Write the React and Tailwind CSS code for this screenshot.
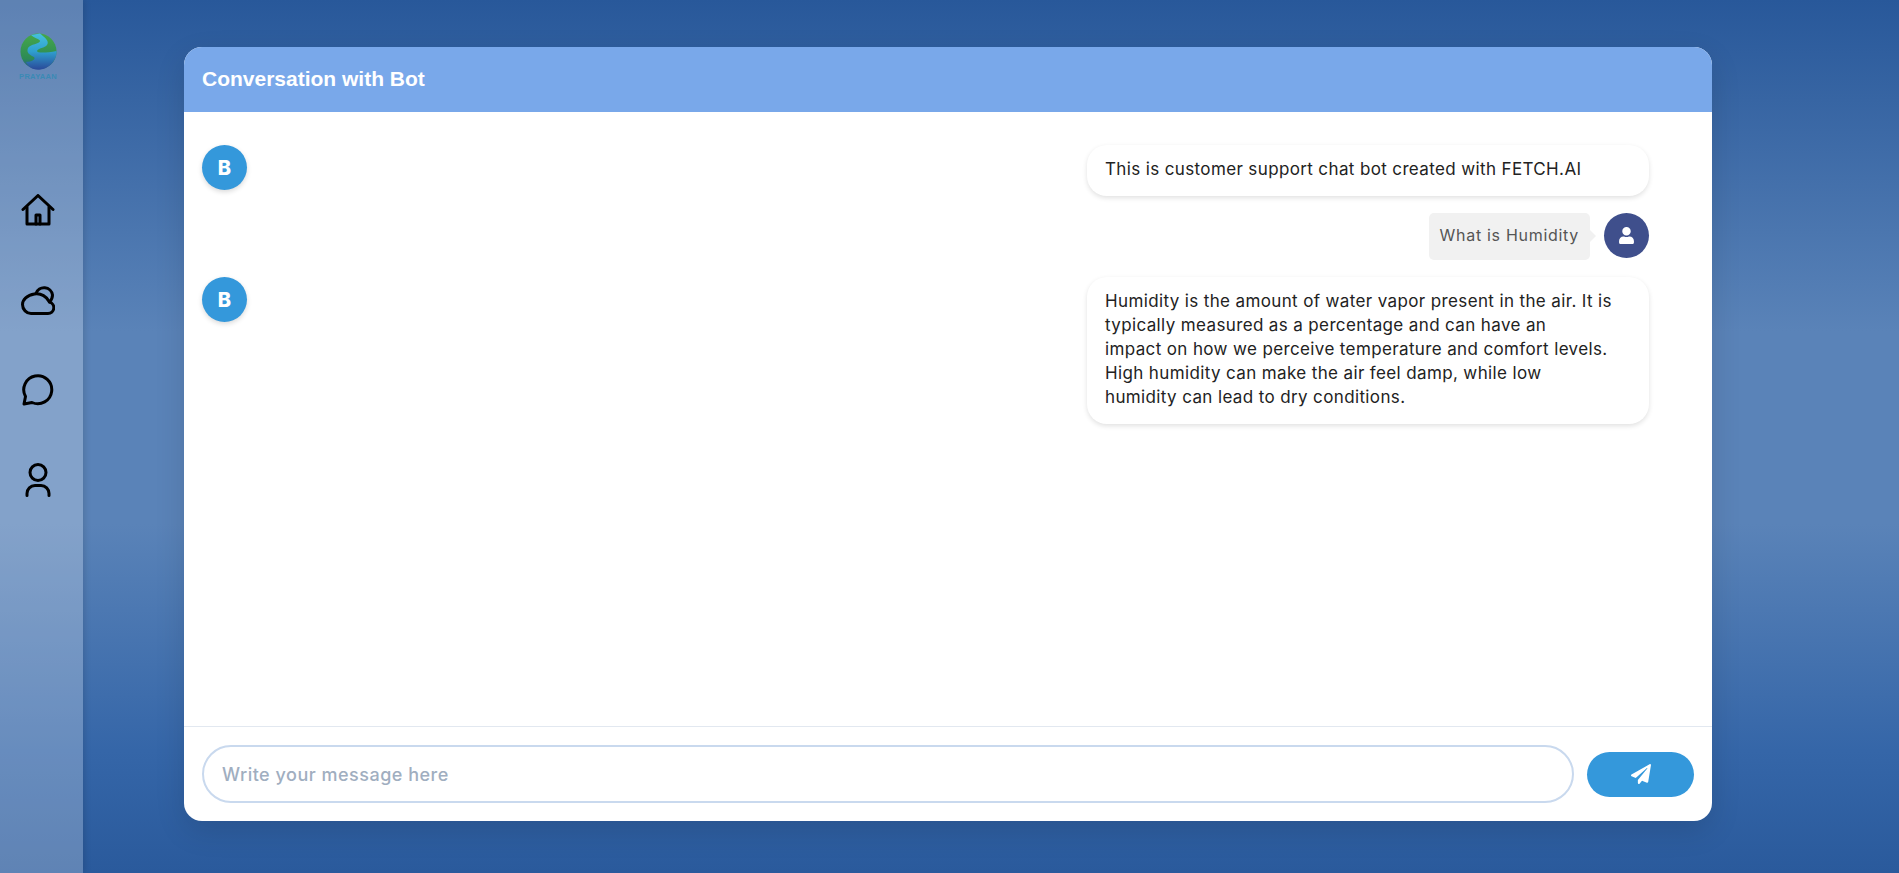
import React from "react";
import { FaPaperPlane, FaUser } from "react-icons/fa";

const Logo = () => (
  <div className="flex flex-col items-center">
    <svg width="37" height="37" viewBox="0 0 37 37">
      <defs>
        <linearGradient id="globe" x1="0" y1="0" x2="0" y2="1">
          <stop offset="0" stopColor="#46a84a" />
          <stop offset="0.7" stopColor="#2c8a55" />
          <stop offset="1" stopColor="#2a4f9c" />
        </linearGradient>
        <linearGradient id="river" x1="0" y1="0" x2="0" y2="1">
          <stop offset="0" stopColor="#45c0dc" />
          <stop offset="0.5" stopColor="#2f9fce" />
          <stop offset="1" stopColor="#2a4a9a" />
        </linearGradient>
      </defs>
      <circle cx="18.5" cy="18.5" r="18" fill="url(#globe)" />
      <path d="M11 2 20 .5C24 4 30 8 27 12c-2 3-9 3-10 6 0 2 9 2 19.500 0C37 28 28 36.500 18 36.500c-6 0-10-3.500-12-7.500 6 0 10-3 8-5-4-2-8-4-6-9 2-4 12-4 12-7 0-2-6-3-9-6z" fill="url(#river)" />
    </svg>
    <span className="mt-[3px] font-['Liberation_Sans',sans-serif] font-bold text-[7.5px] leading-[8px] tracking-[0.3px] text-[#3a8ab5]">PRAYAAN</span>
  </div>
);

const HomeIcon = () => (
  <svg width="34" height="32" viewBox="0 0 34 32" fill="none" stroke="#000" strokeWidth="3" strokeLinecap="round" strokeLinejoin="round">
    <path d="M2 15.500 17 1.500l15 14" />
    <path d="M6 13v17h22V13" />
    <path d="M15 30v-9h4v9" />
  </svg>
);

const CloudIcon = () => (
  <svg width="34" height="30" viewBox="0 0 34 30" fill="none" stroke="#000" strokeWidth="3" strokeLinejoin="round" strokeLinecap="round">
    <path d="M10 27.500H27a5.800 5.800 0 0 0 1.500-11.400C26 10.500 20 7 13.500 8 6 9 1.500 14 1.500 18.500c0 5 4 9 8.500 9z" />
    <path d="M15 7.500A8.500 8.500 0 0 1 31.500 9c0 2.800-1 5-3 7" />
  </svg>
);

const ChatIcon = () => (
  <svg width="32" height="32" viewBox="0 0 32 32" fill="none" stroke="#000" strokeWidth="3" strokeLinejoin="round" strokeLinecap="round">
    <path d="M2 30l1.500-7.500A14 14 0 1 1 10 28.500z" />
  </svg>
);

const UserIcon = () => (
  <svg width="26" height="34" viewBox="0 0 26 34" fill="none" stroke="#000" strokeWidth="3" strokeLinecap="round">
    <circle cx="13" cy="9.500" r="8" />
    <path d="M2 32.500v-2a8 8 0 0 1 8-8h6a8 8 0 0 1 8 8v2" />
  </svg>
);

const BotAvatar = () => (
  <div className="w-[45px] h-[45px] rounded-full bg-[#3498db] shadow-[0_2px_5px_rgba(0,0,0,0.15)] flex items-center justify-center shrink-0 text-white font-extrabold text-[20px] font-['Inter',sans-serif]">
    B
  </div>
);

const BotBubble = ({ children }) => (
  <div className="w-[562px] bg-white rounded-[20px] shadow-[0_2px_5px_rgba(0,0,0,0.12)] px-[18px] pt-[12px] pb-[15px] text-[17px] tracking-[0.37px] leading-[24px] text-[#222]">
    {children}
  </div>
);

export default function App() {
  return (
    <div className="flex h-[873px] overflow-hidden font-['Inter',sans-serif] bg-[linear-gradient(to_bottom,#28589a_0%,#5a83b8_38%,#5a83b8_60%,#3566a8_86%,#2a5a9c_100%)]">
      {/* Sidebar */}
      <div className="w-[83px] shrink-0 bg-white/25 shadow-[2px_0_6px_rgba(0,0,0,0.12)] flex flex-col items-center pt-[33px] pr-[7px]">
        <Logo />
        <nav className="mt-[113px] flex flex-col items-center">
          <HomeIcon />
          <div className="mt-[60px]"><CloudIcon /></div>
          <div className="mt-[58px]"><ChatIcon /></div>
          <div className="mt-[57px]"><UserIcon /></div>
        </nav>
      </div>

      {/* Card */}
      <div className="pl-[101px] pt-[47px]">
        <div className="w-[1528px] h-[774px] bg-white rounded-[18px] overflow-hidden flex flex-col shadow-[0_10px_30px_rgba(0,0,0,0.12)]">
          <div className="h-[65px] shrink-0 bg-[#79a8ea] flex items-center px-[18px] pb-[2px] font-['Liberation_Sans',sans-serif] font-bold text-[21px] text-white">
            Conversation with Bot
          </div>

          <div className="flex-1 pt-[33px] pl-[18px] pr-[63px] flex flex-col gap-[17px]">
            <div className="flex justify-between items-start">
              <BotAvatar />
              <BotBubble>This is customer support chat bot created with FETCH.AI</BotBubble>
            </div>
            <div className="flex justify-end items-start gap-[14px]">
              <div className="relative bg-[#f1f1f1] rounded-[5px] px-[11px] pt-[10px] pb-[13px] text-[16px] tracking-[0.7px] leading-[24px] text-[#555]">
                What is Humidity
                <span className="absolute right-[-6px] top-[17px] border-y-[6px] border-l-[6px] border-y-transparent border-l-[#f1f1f1]" />
              </div>
              <div className="w-[45px] h-[45px] rounded-full bg-[#3f4f8c] flex items-center justify-center shrink-0">
                <FaUser className="text-white text-[17px]" />
              </div>
            </div>
            <div className="flex justify-between items-start">
              <BotAvatar />
              <BotBubble>
                Humidity is the amount of water vapor present in the air. It is<br />
                typically measured as a percentage and can have an<br />
                impact on how we perceive temperature and comfort levels.<br />
                High humidity can make the air feel damp, while low<br />
                humidity can lead to dry conditions.
              </BotBubble>
            </div>
          </div>

          <div className="h-[95px] shrink-0 border-t border-[#e2e8f0] flex items-center gap-[13px] px-[18px]">
            <input
              readOnly
              placeholder="Write your message here"
              className="flex-1 h-[58px] rounded-full border-2 border-[#c9d9ee] px-[18px] text-[18px] tracking-[0.5px] font-medium outline-none placeholder:text-[#a0aec0]"
            />
            <button className="w-[107px] h-[45px] rounded-full bg-[#3498db] flex items-center justify-center">
              <FaPaperPlane className="text-white text-[20px]" />
            </button>
          </div>
        </div>
      </div>
    </div>
  );
}
